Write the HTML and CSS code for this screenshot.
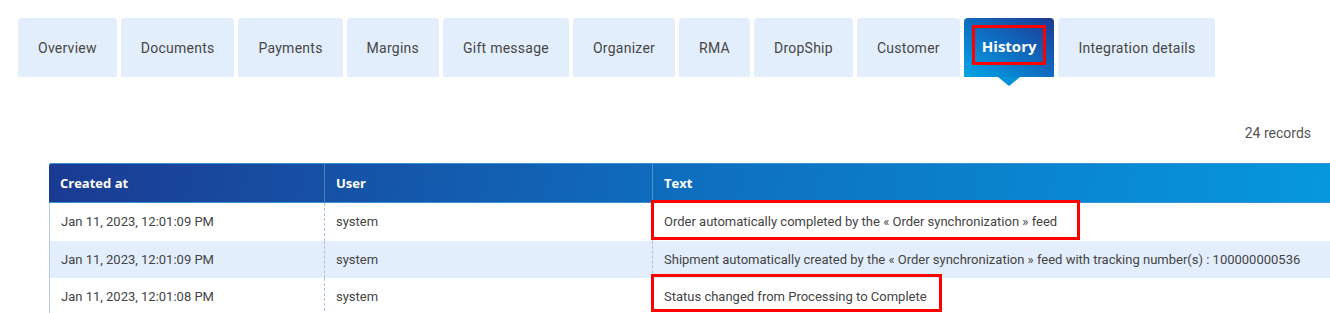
FILE: index.html
```html
<!DOCTYPE html>
<html>
<head>
<meta charset="utf-8">
<link rel="stylesheet" href="styles.css">
</head>
<body>
<nav class="tabs">
  <div class="tab">Overview</div>
  <div class="tab">Documents</div>
  <div class="tab">Payments</div>
  <div class="tab">Margins</div>
  <div class="tab">Gift message</div>
  <div class="tab">Organizer</div>
  <div class="tab">RMA</div>
  <div class="tab">DropShip</div>
  <div class="tab">Customer</div>
  <div class="tab active"><span class="hl">History</span></div>
  <div class="tab">Integration details</div>
</nav>
<div class="records">24 records</div>
<table class="grid">
  <thead>
    <tr><th class="c1">Created at</th><th class="c2">User</th><th class="c3">Text</th></tr>
  </thead>
  <tbody>
    <tr><td>Jan 11, 2023, 12:01:09 PM</td><td>system</td><td class="marked"><span class="mark mark-1"></span>Order automatically completed by the « Order synchronization » feed</td></tr>
    <tr class="alt"><td>Jan 11, 2023, 12:01:09 PM</td><td>system</td><td>Shipment automatically created by the « Order synchronization » feed with tracking number(s) : 100000000536</td></tr>
    <tr><td>Jan 11, 2023, 12:01:08 PM</td><td>system</td><td class="marked"><span class="mark mark-2"></span>Status changed from Processing to Complete</td></tr>
  </tbody>
</table>
</body>
</html>
```
FILE: styles.css
```css
html, body {
  margin: 0;
  padding: 0;
  background: #fff;
  overflow: hidden;
}
body {
  font-family: Roboto, "Liberation Sans", sans-serif;
  color: #444;
  width: 1330px;
  height: 313px;
}
.tabs {
  display: flex;
  gap: 4px;
  padding: 18px 0 0 18px;
  height: 59px;
}
.tab {
  display: flex;
  align-items: center;
  justify-content: center;
  padding: 0 20px;
  background: #e2eefc;
  border-radius: 4px 4px 0 0;
  font-size: 14px;
  letter-spacing: 0.25px;
  color: #474747;
  position: relative;
}
.tab.active {
  background: linear-gradient(to top right, #03a6e6 0%, #0f6cc0 50%, #1b3a92 100%);
  color: #fff;
  font-family: "Open Sans", sans-serif;
  font-weight: 700;
  font-size: 15px;
  letter-spacing: 0;
  padding: 0 8px;
}
.tab.active::after {
  content: "";
  position: absolute;
  left: 50%;
  bottom: -9px;
  margin-left: -11px;
  border-left: 11px solid transparent;
  border-right: 11px solid transparent;
  border-top: 9px solid #0692d8;
}
.hl {
  display: inline-block;
  border: 3px solid #f00;
  padding: 9px 7px 7px;
  line-height: 18px;
  margin-top: -5px;
}
.records {
  text-align: right;
  padding: 48px 19px 0 0;
  font-size: 14px;
  color: #555;
  line-height: 16px;
}
.grid {
  margin: 22px 0 0 49px;
  width: 1300px;
  border-collapse: separate;
  border-spacing: 0;
  font-size: 13px;
  table-layout: fixed;
}
.grid th {
  height: 38px;
  text-align: left;
  color: #fff;
  font-family: "Open Sans", sans-serif;
  font-weight: 700;
  font-size: 13px;
  padding: 0 11px;
  border-top: 1px solid #3c8fd8;
  border-bottom: 1px solid #3c8fd8;
  border-left: 1px solid rgba(255,255,255,0.25);
}
.grid thead tr {
  background: linear-gradient(100deg, #1b3a92 0%, #0e6fbf 50%, #0599dd 100%);
}
.grid th.c1 {
  width: 253px;
  border-left: none;
  border-top-left-radius: 3px;
}
.grid th.c2 { width: 305px; }
.grid td {
  padding: 0 11px;
  height: 37.5px;
  color: #444;
  white-space: nowrap;
  border-left: 1px dashed #a8c2e6;
}
.grid td:first-child {
  border-left: 1px solid #b9cbe4;
}
.grid tr.alt td {
  background: #e3eefc;
}
.marked {
  position: relative;
}
.mark {
  position: absolute;
  border: 3px solid #f00;
  box-sizing: border-box;
  left: -2px;
}
.mark-1 {
  top: -3px;
  width: 429px;
  height: 40px;
}
.mark-2 {
  top: -4px;
  width: 291px;
  height: 38px;
}
```
